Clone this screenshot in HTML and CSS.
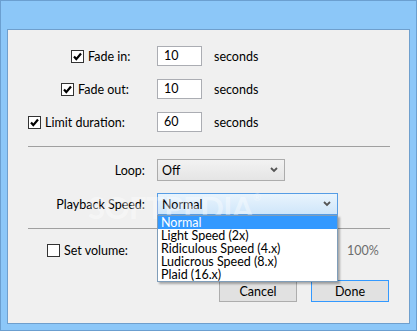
FILE: index.html
```html
<!DOCTYPE html>
<html lang="en">

<head>
  <meta charset="UTF-8">
  <title>Fade options</title>
  <link rel="stylesheet" href="styles.css">
</head>

<body>
  <div class="window">
    <div class="panel">
      <div class="row first">
        <label class="lead check-fade-in"><span class="box checked"><svg viewBox="0 0 11 11"><path d="M2 5.5l2.3 2.6L9 2.5"/></svg></span>Fade in:</label>
        <span class="field">10</span>
        <span class="unit">seconds</span>
      </div>
      <div class="row">
        <label class="lead check-fade-out"><span class="box checked"><svg viewBox="0 0 11 11"><path d="M2 5.5l2.3 2.6L9 2.5"/></svg></span>Fade out:</label>
        <span class="field">10</span>
        <span class="unit">seconds</span>
      </div>
      <div class="row">
        <label class="lead check-limit"><span class="box checked"><svg viewBox="0 0 11 11"><path d="M2 5.5l2.3 2.6L9 2.5"/></svg></span>Limit duration:</label>
        <span class="field">60</span>
        <span class="unit">seconds</span>
      </div>

      <hr class="sep sep-top">

      <div class="row select-row">
        <span class="lead right">Loop:</span>
        <span class="combo combo-loop">Off<svg class="chev" viewBox="0 0 8 6"><path d="M1 1l3 3 3-3"/></svg></span>
      </div>
      <div class="row select-row">
        <span class="lead right">Playback Speed:</span>
        <span class="combo combo-speed open">Normal<svg class="chev" viewBox="0 0 8 6"><path d="M1 1l3 3 3-3"/></svg></span>
      </div>

      <hr class="sep sep-mid">

      <div class="row volume-row">
        <label class="lead check-volume"><span class="box"></span>Set volume:</label>
        <span class="percent">100%</span>
      </div>

      <div class="buttons">
        <button class="btn">Cancel</button>
        <button class="btn default">Done</button>
      </div>

      <div class="watermark">SOFTPEDIA<sup>®</sup></div>

      <ul class="dropdown">
        <li class="selected">Normal</li>
        <li>Light Speed (2x)</li>
        <li>Ridiculous Speed (4.x)</li>
        <li>Ludicrous Speed (8.x)</li>
        <li>Plaid (16.x)</li>
      </ul>
    </div>
  </div>
</body>

</html>
```

FILE: styles.css
```css
* {
  box-sizing: border-box;
}

body {
  margin: 0;
  font-family: Lato, "Noto Sans", sans-serif;
  font-size: 12.5px;
  color: #000;
}

.window {
  width: 417px;
  height: 331px;
  display: flex;
  flex-direction: column;
  padding: 28px 6px 6px;
  background-color: #8cc7f8;
  border: 1px solid #6b9fd0;
}

.panel {
  position: relative;
  flex: 1;
  display: flex;
  flex-direction: column;
  background-color: #f0f0f0;
  border: 1px solid #6f9fcd;
}

.row {
  display: flex;
  align-items: center;
  height: 20px;
  margin-top: 13px;

  &.first {
    margin-top: 16px;
  }
}

.lead {
  display: flex;
  align-items: center;
  width: 149px;
  flex: none;
  white-space: nowrap;

  &.right {
    justify-content: flex-end;
    padding-right: 12px;
  }
}

.check-fade-in {
  padding-left: 63px;
}

.check-fade-out {
  padding-left: 53px;
}

.check-limit {
  padding-left: 20px;
}

.check-volume {
  padding-left: 39px;
}

.box {
  display: inline-flex;
  width: 13px;
  height: 13px;
  margin-right: 4px;
  background-color: #fff;
  border: 1px solid #333;

  & svg {
    width: 11px;
    height: 11px;
    fill: none;
    stroke: #000;
    stroke-width: 2.2;
  }
}

.field {
  width: 45px;
  height: 20px;
  padding-left: 6px;
  line-height: 18px;
  background-color: #fff;
  border: 1px solid #abadb3;
}

.unit {
  margin-left: 12px;
}

.sep {
  margin: 14px 19px 0 20px;
  border: 0;
  border-top: 1px solid #a0a0a0;
  height: 0;
}

.sep-mid {
  margin-top: 13px;
}

.select-row {
  height: 22px;
  margin-top: 12px;
}

.combo {
  display: flex;
  align-items: center;
  justify-content: space-between;
  height: 22px;
  padding: 0 6px 0 4px;
  background: linear-gradient(#f2f2f2, #e5e5e5);
  border: 1px solid #acacac;

  &.open {
    background: linear-gradient(#e9f4fd, #cfe6fa);
    border-color: #569de5;
  }
}

.combo-loop {
  width: 128px;
}

.combo-speed {
  width: 181px;
}

.chev {
  width: 8px;
  height: 6px;
  fill: none;
  stroke: #555;
  stroke-width: 1.8;
}

.volume-row {
  margin-top: 11px;
}

.percent {
  margin-left: 190px;
  color: #6d6d6d;
}

.buttons {
  display: flex;
  justify-content: flex-end;
  gap: 14px;
  margin-top: 20px;
  padding-right: 20px;
}

.btn {
  width: 78px;
  height: 22px;
  padding: 0;
  font: inherit;
  color: #000;
  background-color: #e1e1e1;
  border: 1px solid #adadad;

  &.default {
    border-color: #3399ff;
  }
}

.watermark {
  position: absolute;
  left: 80px;
  top: 158px;
  font-size: 31px;
  font-weight: 700;
  color: rgba(255, 255, 255, 0.4);
  letter-spacing: -0.5px;
  pointer-events: none;

  & sup {
    font-size: 10px;
    font-weight: 400;
    vertical-align: 18px;
  }
}

.dropdown {
  position: absolute;
  left: 149px;
  top: 185px;
  width: 181px;
  margin: 0;
  padding: 0;
  list-style: none;
  background-color: #fff;
  border: 1px solid #7f9db9;
  box-shadow: 2px 2px 2px rgba(0, 0, 0, 0.3);

  & li {
    height: 13px;
    padding-left: 3px;
    line-height: 13px;
  }

  & .selected {
    background-color: #3399ff;
    color: #fff;
  }
}
```
